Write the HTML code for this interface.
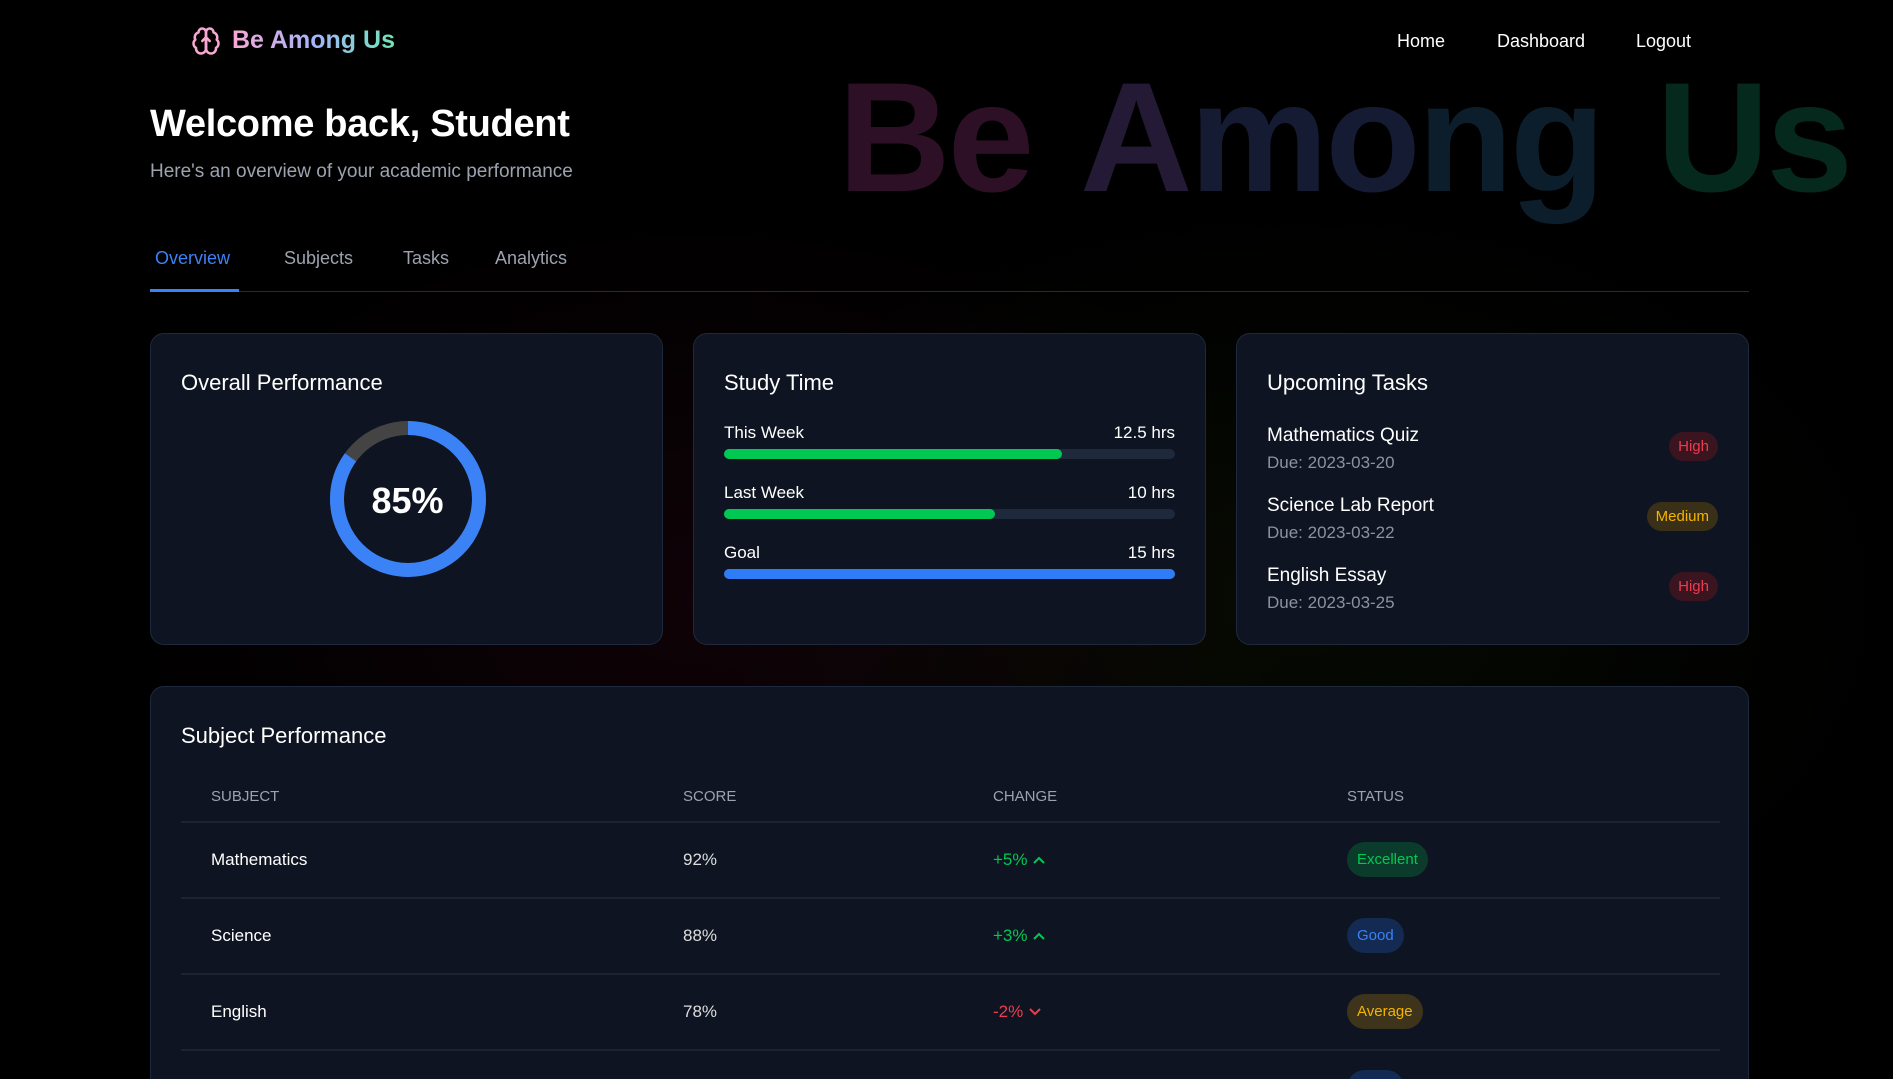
<!DOCTYPE html>
<html><head><meta charset="utf-8"><style>
*{box-sizing:border-box;margin:0;padding:0}
html,body{width:1893px;height:1079px;overflow:hidden}
body{background:#000;font-family:"Liberation Sans","DejaVu Sans",sans-serif;color:#fff;position:relative}
.bg{position:absolute;inset:0;background:radial-gradient(ellipse 600px 400px at 700px 600px,rgba(60,10,30,.25),transparent),radial-gradient(ellipse 600px 400px at 1300px 600px,rgba(30,50,10,.2),transparent)}
.wm{position:absolute;left:838px;top:60px;font-size:156px;font-weight:bold;letter-spacing:-3px;word-spacing:14px;white-space:nowrap;line-height:1}
.abs{position:absolute;white-space:nowrap}
.card{position:absolute;background:#0e1421;border:1px solid #1e293b;border-radius:14px}
.ct{position:absolute;left:30px;top:36px;font-size:22px}
.bar{position:absolute;left:30px;width:451px;height:10px;border-radius:5px;background:#1e293b}
.bar i{display:block;height:100%;border-radius:5px}
.lbl{position:absolute;left:30px;font-size:17px}
.val{position:absolute;right:30px;font-size:17px}
.tt{position:absolute;left:30px;font-size:19px}
.due{position:absolute;left:30px;font-size:17px;color:#8b93a1}
.pill{position:absolute;right:30px;height:29px;line-height:29px;padding:0 9px;border-radius:15px;font-size:15px}
.th{position:absolute;top:788px;font-size:15px;color:#9ca3af}
.line{position:absolute;left:181px;width:1539px;height:2px;background:#1c2432}
.td{position:absolute;font-size:17px}
.st{position:absolute;left:1347px;height:35px;line-height:35px;padding:0 10px;border-radius:18px;font-size:15px}
</style></head><body>
<div class="bg"></div>
<div class="wm"><span style="color:#2e1026">Be</span> <span style="color:#241a35">A</span><span style="color:#161b34">mo</span><span style="color:#0c1e2c">ng</span> <span style="color:#06291d">Us</span></div>

<svg class="abs" style="left:191px;top:25px" width="30" height="32" viewBox="0 0 24 24" fill="none" stroke="#f9a8d4" stroke-width="2" stroke-linecap="round" stroke-linejoin="round"><path d="M12 5a3 3 0 1 0-5.997.125 4 4 0 0 0-2.526 5.770 4 4 0 0 0 .556 6.588A4 4 0 1 0 12 18Z"/><path d="M12 5a3 3 0 1 1 5.997.125 4 4 0 0 1 2.526 5.77 4 4 0 0 1-.556 6.588A4 4 0 1 1 12 18Z"/><path d="M12 18V9M9 12l3-3 3 3"/></svg>
<div class="abs" style="left:232px;top:26px;font-size:25px;font-weight:bold;background:linear-gradient(90deg,#f9a8d4,#a5b4fc 50%,#6ee7b7);-webkit-background-clip:text;color:transparent">Be Among Us</div>
<div class="abs" style="left:1397px;top:31px;font-size:18px">Home</div>
<div class="abs" style="left:1497px;top:31px;font-size:18px">Dashboard</div>
<div class="abs" style="left:1636px;top:31px;font-size:18px">Logout</div>

<div class="abs" style="left:150px;top:103px;font-size:38px;font-weight:bold;letter-spacing:-.3px">Welcome back, Student</div>
<div class="abs" style="left:150px;top:161px;font-size:19px;color:#9ca3af">Here's an overview of your academic performance</div>

<div class="abs" style="left:155px;top:248px;font-size:18px;color:#3b82f6">Overview</div>
<div class="abs" style="left:284px;top:248px;font-size:18px;color:#9ca3af">Subjects</div>
<div class="abs" style="left:403px;top:248px;font-size:18px;color:#9ca3af">Tasks</div>
<div class="abs" style="left:495px;top:248px;font-size:18px;color:#9ca3af">Analytics</div>
<div class="abs" style="left:150px;top:291px;width:1599px;height:1px;background:#1e2d44"></div>
<div class="abs" style="left:150px;top:289px;width:89px;height:3px;background:#3b82f6"></div>

<div class="card" style="left:150px;top:333px;width:513px;height:312px">
<div class="ct">Overall Performance</div>
<svg class="abs" style="left:178px;top:86px" width="158" height="158" viewBox="0 0 158 158"><circle cx="79" cy="79" r="71" fill="none" stroke="#444" stroke-width="14"/><circle cx="79" cy="79" r="71" fill="none" stroke="#3b82f6" stroke-width="14" stroke-dasharray="379 446" transform="rotate(-90 79 79)"/></svg>
<div class="abs" style="left:0;width:513px;text-align:center;top:146px;font-size:36px;font-weight:bold">85%</div>
</div>

<div class="card" style="left:693px;top:333px;width:513px;height:312px">
<div class="ct">Study Time</div>
<div class="lbl" style="top:89px">This Week</div><div class="val" style="top:89px">12.5 hrs</div>
<div class="bar" style="top:115px"><i style="width:75%;background:#00c853"></i></div>
<div class="lbl" style="top:149px">Last Week</div><div class="val" style="top:149px">10 hrs</div>
<div class="bar" style="top:175px"><i style="width:60%;background:#00c853"></i></div>
<div class="lbl" style="top:209px">Goal</div><div class="val" style="top:209px">15 hrs</div>
<div class="bar" style="top:235px"><i style="width:100%;background:#2f7df6"></i></div>
</div>

<div class="card" style="left:1236px;top:333px;width:513px;height:312px">
<div class="ct">Upcoming Tasks</div>
<div class="tt" style="top:91px">Mathematics Quiz</div><div class="due" style="top:119px">Due: 2023-03-20</div>
<div class="pill" style="top:98px;background:#3a1520;color:#ef3b4f">High</div>
<div class="tt" style="top:161px">Science Lab Report</div><div class="due" style="top:189px">Due: 2023-03-22</div>
<div class="pill" style="top:168px;background:#3a3018;color:#f5b400">Medium</div>
<div class="tt" style="top:231px">English Essay</div><div class="due" style="top:259px">Due: 2023-03-25</div>
<div class="pill" style="top:238px;background:#3a1520;color:#ef3b4f">High</div>
</div>

<div class="card" style="left:150px;top:686px;width:1599px;height:420px">
<div class="ct" style="top:36px">Subject Performance</div>
</div>
<div class="th" style="left:211px">SUBJECT</div>
<div class="th" style="left:683px">SCORE</div>
<div class="th" style="left:993px">CHANGE</div>
<div class="th" style="left:1347px">STATUS</div>
<div class="line" style="top:821px"></div>
<div class="line" style="top:897px"></div>
<div class="line" style="top:973px"></div>
<div class="line" style="top:1049px"></div>

<div class="td" style="left:211px;top:850px">Mathematics</div>
<div class="td" style="left:683px;top:850px;color:#ddd">92%</div>
<div class="td" style="left:993px;top:850px;color:#00c853">+5% <svg width="14" height="10" viewBox="0 0 14 10"><path d="M2 8l5-5 5 5" stroke="#00c853" stroke-width="2" fill="none"/></svg></div>
<div class="st" style="top:842px;background:#0b3b2a;color:#00c853">Excellent</div>

<div class="td" style="left:211px;top:926px">Science</div>
<div class="td" style="left:683px;top:926px;color:#ddd">88%</div>
<div class="td" style="left:993px;top:926px;color:#00c853">+3% <svg width="14" height="10" viewBox="0 0 14 10"><path d="M2 8l5-5 5 5" stroke="#00c853" stroke-width="2" fill="none"/></svg></div>
<div class="st" style="top:918px;background:#132a52;color:#3b82f6">Good</div>

<div class="td" style="left:211px;top:1002px">English</div>
<div class="td" style="left:683px;top:1002px;color:#ddd">78%</div>
<div class="td" style="left:993px;top:1002px;color:#ef3b4f">-2% <svg width="14" height="10" viewBox="0 0 14 10"><path d="M2 2l5 5 5-5" stroke="#ef3b4f" stroke-width="2" fill="none"/></svg></div>
<div class="st" style="top:994px;background:#3d341b;color:#f5b400">Average</div>

<div class="st" style="top:1070px;background:#132a52;color:#3b82f6">Good</div>
</body></html>
